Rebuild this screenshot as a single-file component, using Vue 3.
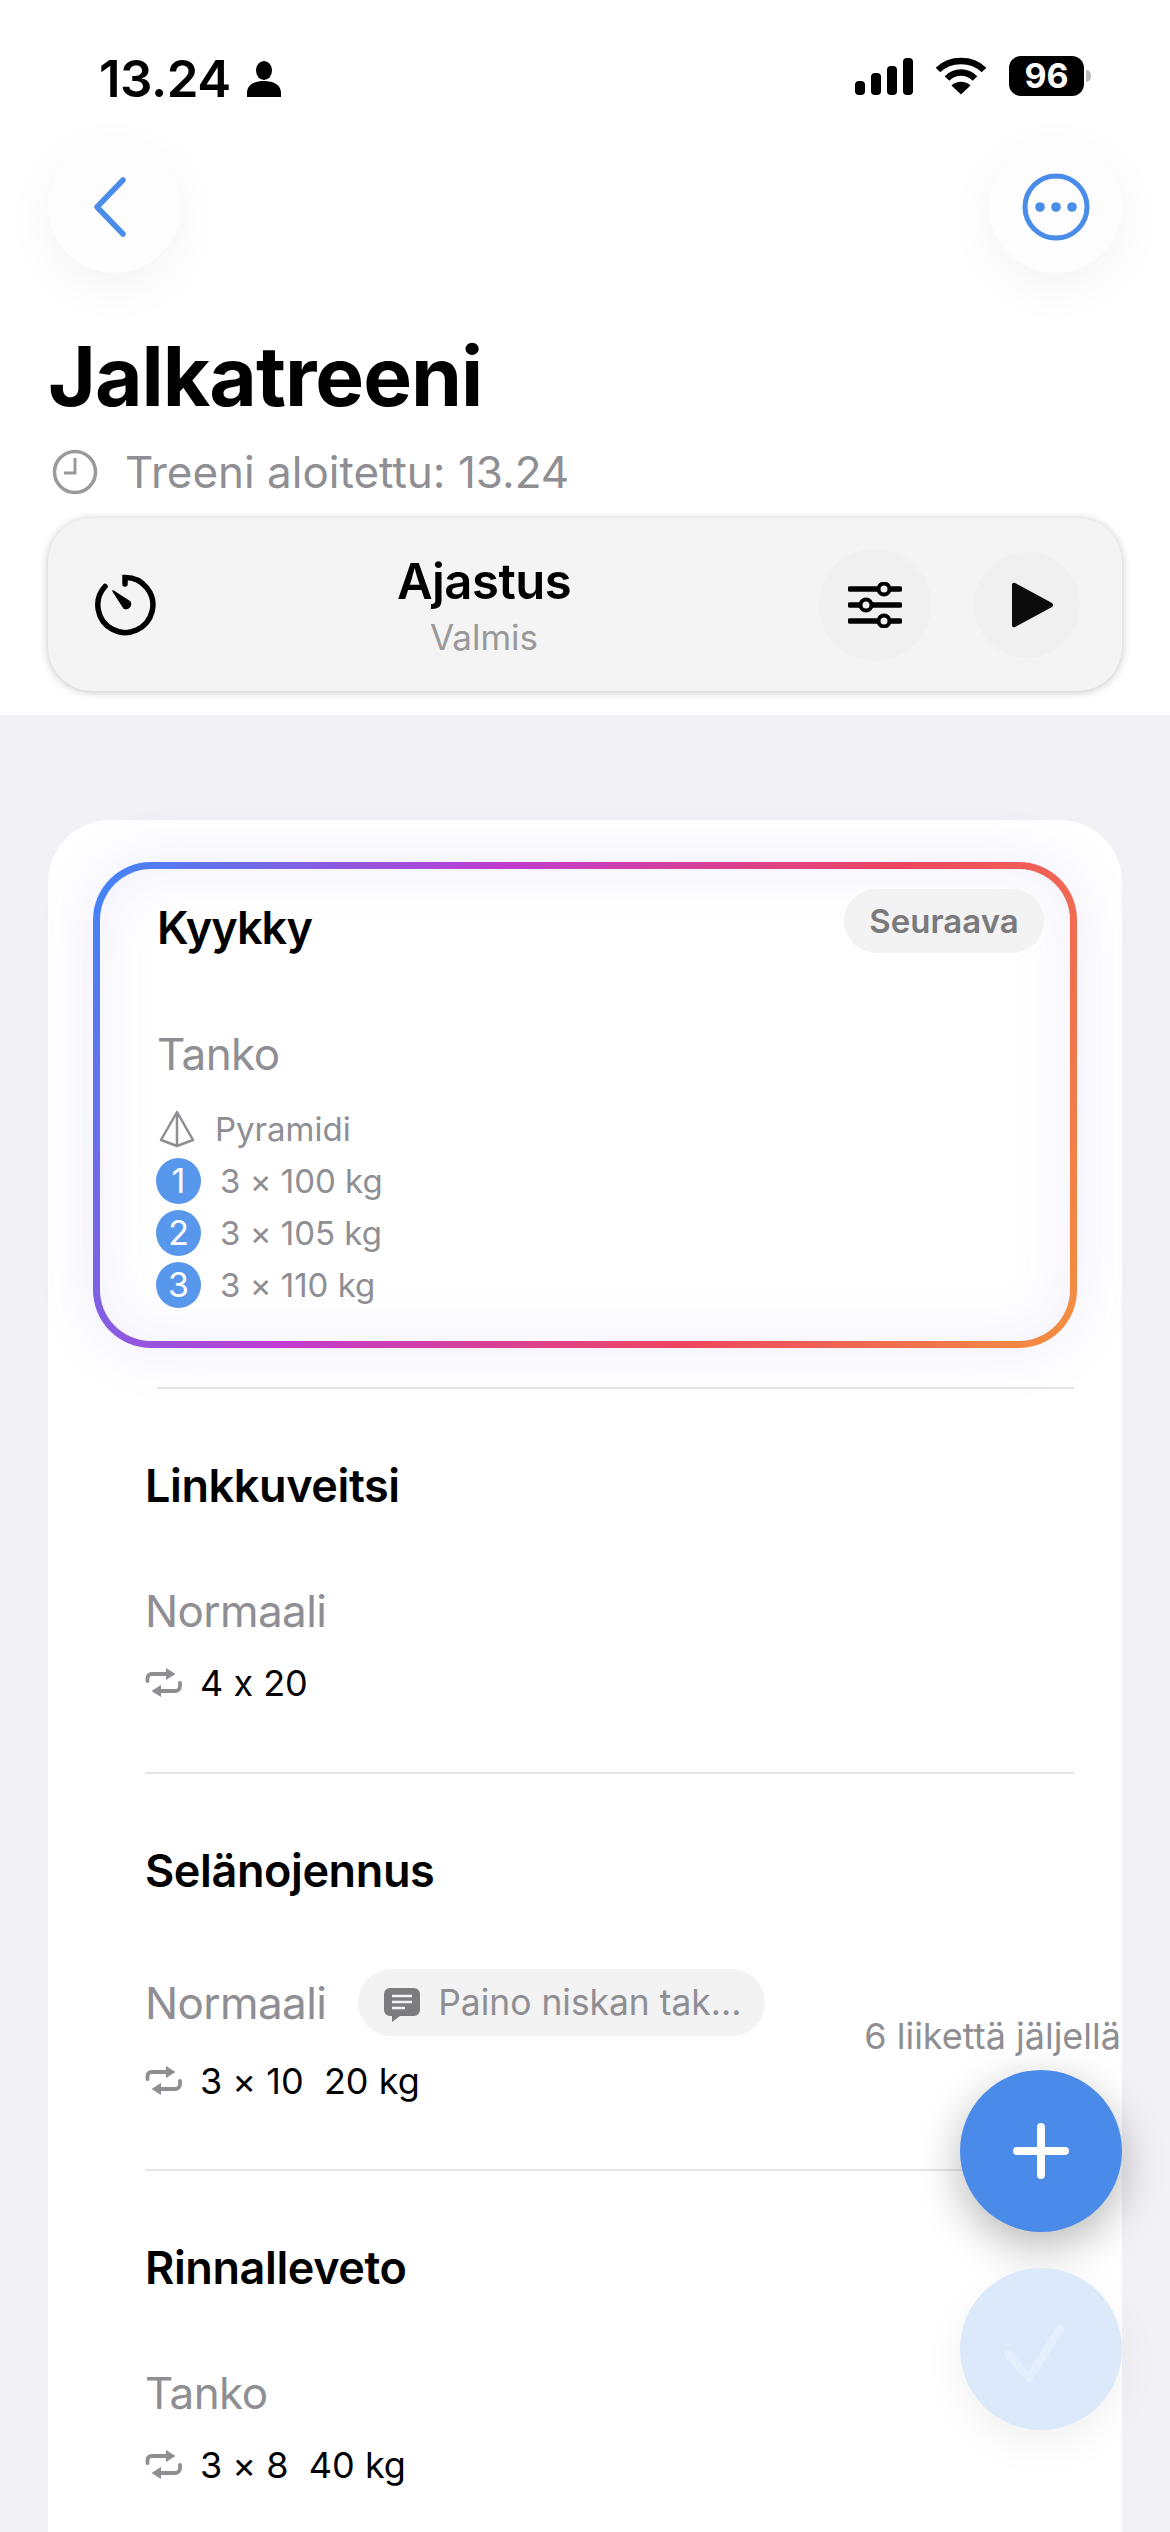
<template>
  <div class="page">
    <header class="head">
      <div class="status">
        <div class="status-left">
          <span class="clock">13.24</span>
          <svg width="34" height="36" viewBox="0 0 34 36"><ellipse cx="17" cy="9.5" rx="8" ry="9.5" fill="#000" /><path d="M0 36v-4c0-8 7-12 17-12s17 4 17 12v4z" fill="#000" /></svg>
        </div>
        <div class="status-right">
          <svg width="58" height="37" viewBox="0 0 58 37" fill="#000"><rect x="0" y="23" width="10" height="14" rx="4" /><rect x="16" y="15" width="10" height="22" rx="4" /><rect x="32" y="8" width="10" height="29" rx="4" /><rect x="48" y="0" width="10" height="37" rx="4" /></svg>
          <svg class="wifi" width="52" height="38" viewBox="0 0 52 38" fill="none" stroke="#000" stroke-width="6.5"><path d="M3 13C15 1 37 1 49 13" /><path d="M12 21.5c8-8 20-8 28 0" /><path d="M26 37.500l-9.500-9c5-5 14-5 19 0z" fill="#000" stroke="none" /></svg>
          <div class="battery">96</div>
          <div class="battery-nub"></div>
        </div>
      </div>

      <div class="nav">
        <button class="round">
          <svg class="back" width="36" height="60" viewBox="0 0 36 60" fill="none" stroke="#4a8de8" stroke-width="5.500" stroke-linecap="round" stroke-linejoin="round"><path d="M30 3L4 30l26 27" /></svg>
        </button>
        <button class="round">
          <svg width="68" height="68" viewBox="0 0 68 68" fill="none"><circle cx="34" cy="34" r="31" stroke="#4a8de8" stroke-width="5" /><circle cx="18" cy="34" r="4.800" fill="#4a8de8" /><circle cx="34" cy="34" r="4.800" fill="#4a8de8" /><circle cx="50" cy="34" r="4.800" fill="#4a8de8" /></svg>
        </button>
      </div>

      <h1 class="title">Jalkatreeni</h1>

      <div class="started">
        <svg width="46" height="46" viewBox="0 0 46 46" fill="none" stroke="#999" stroke-width="3.500"><circle cx="23" cy="23" r="20.500" /><path d="M23 9v15H12" stroke-width="3" /></svg>
        <span>Treeni aloitettu: 13.24</span>
      </div>

      <div class="timer">
        <svg class="stopwatch" width="62" height="62" viewBox="0 0 62 62" fill="none" stroke="#000" stroke-width="5.500" stroke-linecap="round"><path d="M30 10V3.500A27.500 27.500 0 1 1 10 12.500" /><path d="M18 17l17 11a4.500 4.500 0 0 1-6 6z" fill="#000" stroke-width="1.500" stroke-linejoin="round" /></svg>
        <div class="timer-text">
          <div class="timer-name">Ajastus</div>
          <div class="timer-state">Valmis</div>
        </div>
        <button class="soft soft-big">
          <svg width="54" height="46" viewBox="0 0 54 46" fill="none" stroke="#000" stroke-linecap="round"><path d="M2 7h50M2 23h50M2 39h50" stroke-width="5.500" /><circle cx="36" cy="7" r="5.500" fill="#f0f0f0" stroke-width="4" /><circle cx="18" cy="23" r="5.500" fill="#f0f0f0" stroke-width="4" /><circle cx="36" cy="39" r="5.500" fill="#f0f0f0" stroke-width="4" /></svg>
        </button>
        <button class="soft soft-small">
          <svg width="42" height="46" viewBox="0 0 42 46"><path d="M3 1l37 20a2.500 2.500 0 0 1 0 4L3 45a2 2 0 0 1-3-2V3a2 2 0 0 1 3-2z" fill="#0c0c0c" /></svg>
        </button>
      </div>
    </header>

    <section class="card">
      <div class="current">
        <span class="next-badge">Seuraava</span>
        <div class="item-name current-name">Kyykky</div>
        <div class="item-type current-type">Tanko</div>
        <div class="pyramid">
          <svg width="36" height="38" viewBox="0 0 36 38" fill="none" stroke="#8e8e93" stroke-width="2.500" stroke-linejoin="round"><path d="M18 2L2 30l16 6 16-6zM18 2v34" /></svg>
          <span>Pyramidi</span>
        </div>
        <div v-for="(s, i) in sets" :key="i" class="set">
          <span class="set-num">{{ i + 1 }}</span>
          <span>{{ s }}</span>
        </div>
      </div>

      <div class="list">
        <div v-for="item in items" :key="item.name" class="item" :class="{ first: item.first }">
          <div class="item-name">{{ item.name }}</div>
          <div class="type-row" :class="{ 'with-note': item.note }">
            <span class="item-type">{{ item.type }}</span>
            <span v-if="item.note" class="note">
              <svg width="36" height="34" viewBox="0 0 36 34"><path d="M6 0h24a6 6 0 0 1 6 6v16a6 6 0 0 1-6 6H16l-8 6v-6H6a6 6 0 0 1-6-6V6a6 6 0 0 1 6-6z" fill="#7c7c7f" /><path d="M8 8h20M8 14h20M8 20h13" stroke="#f3f3f4" stroke-width="2.500" /></svg>
              <span>{{ item.note }}</span>
            </span>
          </div>
          <div class="reps">
            <svg width="38" height="30" viewBox="0 0 38 30" fill="none" stroke="#8e8e93" stroke-width="3.800" stroke-linecap="round"><path d="M2.500 13v-3a4 4 0 0 1 4-4H23" /><path d="M21 0l9.500 6L21 12z" fill="#8e8e93" stroke="none" /><path d="M35 15v3a5 5 0 0 1-5 5H15" /><path d="M16 17L6.500 23l9.500 6z" fill="#8e8e93" stroke="none" /></svg>
            <span>{{ item.reps }}</span>
          </div>
        </div>
      </div>
    </section>

    <div class="left-count">6 liikettä jäljellä</div>
    <button class="fab fab-add">
      <svg width="56" height="56" viewBox="0 0 56 56" stroke="#fff" stroke-width="8" stroke-linecap="round"><path d="M28 4v48M4 28h48" /></svg>
    </button>
    <button class="fab fab-done">
      <svg width="62" height="58" viewBox="0 0 62 58" fill="none" stroke="#e5eefb" stroke-width="8" stroke-linecap="round" stroke-linejoin="round"><path d="M5 30l21 24L57 5" /></svg>
    </button>
  </div>
</template>

<script setup>
const sets = ['3 × 100 kg', '3 × 105 kg', '3 × 110 kg']

const items = [
  { name: 'Linkkuveitsi', type: 'Normaali', reps: '4 x 20', first: true },
  { name: 'Selänojennus', type: 'Normaali', reps: '3 × 10\u00a0\u00a020 kg', note: 'Paino niskan tak...' },
  { name: 'Rinnalleveto', type: 'Tanko', reps: '3 × 8\u00a0\u00a040 kg' }
]
</script>

<style>
html, body {
  margin: 0;
  background: #f1f1f6;
}
</style>

<style scoped>
.page {
  position: relative;
  width: 1170px;
  height: 2532px;
  overflow: hidden;
  background: #f1f1f6;
  font-family: Inter, "Liberation Sans", sans-serif;
  font-feature-settings: "calt" 0;
  color: #000;
}

button {
  border: none;
  padding: 0;
  display: flex;
  align-items: center;
  justify-content: center;
}

.head {
  background: #fff;
  height: 715px;
  box-sizing: border-box;
  padding: 0 48px;
}

.status {
  height: 140px;
  display: flex;
  justify-content: space-between;
  align-items: flex-start;
  padding: 50px 31px 0 51px;
  box-sizing: border-box;
}

.status-left {
  display: flex;
  align-items: center;
  gap: 16px;
  height: 56px;
}

.clock {
  font-size: 51px;
  font-weight: 600;
  letter-spacing: -0.500px;
}

.status-left svg {
  margin-top: 2px;
}

.status-right {
  display: flex;
  align-items: center;
  height: 56px;
  margin-top: -2px;
}

.wifi {
  margin-left: 22px;
}

.battery {
  margin-left: 22px;
  width: 75px;
  height: 40px;
  border-radius: 12px;
  background: #000;
  color: #fff;
  font-size: 34px;
  font-weight: 700;
  line-height: 40px;
  text-align: center;
}

.battery-nub {
  width: 5px;
  height: 12px;
  margin-left: 2px;
  border-radius: 0 6px 6px 0;
  background: #bbb;
}

.nav {
  display: flex;
  justify-content: space-between;
  height: 133px;
}

.round {
  width: 133px;
  height: 133px;
  border-radius: 50%;
  background: #fdfdfd;
  box-shadow: 0 14px 50px rgba(0, 0, 0, 0.05);
}

.back {
  margin-left: -8px;
}

.title {
  margin: 66px 0 0;
  height: 76px;
  font-size: 82px;
  line-height: 76px;
  font-weight: 700;
  letter-spacing: -1px;
}

.started {
  display: flex;
  align-items: center;
  gap: 27px;
  margin-top: 34px;
  padding-left: 4px;
  height: 46px;
  font-size: 44px;
  color: #8e8e93;
}

.timer {
  position: relative;
  display: flex;
  align-items: center;
  height: 173px;
  margin-top: 23px;
  padding: 0 42px 0 47px;
  box-sizing: border-box;
  border-radius: 44px;
  background: #f4f4f5;
  box-shadow: 0 1px 8px rgba(0, 0, 0, 0.24);
}

.timer-text {
  flex: 1;
  text-align: center;
  margin-left: -2px;
  padding-right: 6px;
}

.timer-name {
  font-size: 49px;
  line-height: 60px;
  font-weight: 600;
  letter-spacing: -0.500px;
}

.timer-state {
  margin-top: 4px;
  font-size: 35px;
  line-height: 42px;
  color: #999;
}

.soft {
  border-radius: 50%;
  background: #f0f0f0;
}

.soft-big {
  width: 112px;
  height: 112px;
}

.soft-small {
  width: 106px;
  height: 106px;
  margin-left: 43px;
}

.soft-small svg {
  margin-left: 12px;
}

.card {
  margin: 105px 48px 0;
  height: 1800px;
  box-sizing: border-box;
  padding: 42px 45px 0;
  border-radius: 62px 62px 0 0;
  background: #fff;
}

.current {
  position: relative;
  height: 486px;
  box-sizing: border-box;
  padding: 31px 57px 0;
  border: 7px solid transparent;
  border-radius: 58px;
  background:
    linear-gradient(#fff, #fff) padding-box,
    linear-gradient(115deg, #3f86f8 0%, #c03cd0 34%, #ee4560 67%, #f39240 100%) border-box;
  box-shadow: 0 0 60px rgba(110, 100, 220, 0.12), inset 0 0 60px rgba(110, 100, 220, 0.1);
}

.next-badge {
  position: absolute;
  top: 20px;
  right: 26px;
  width: 200px;
  height: 64px;
  border-radius: 32px;
  background: #f3f3f4;
  color: #7a7a7c;
  font-size: 33px;
  font-weight: 600;
  line-height: 64px;
  text-align: center;
}

.item-name {
  font-size: 45px;
  line-height: 56px;
  font-weight: 600;
  letter-spacing: -0.400px;
}

.current-name {
  letter-spacing: -1px;
}

.item-type {
  font-size: 44px;
  line-height: 50px;
  letter-spacing: -0.600px;
  color: #8e8e93;
}

.current-type {
  margin-top: 73px;
}

.pyramid {
  display: flex;
  align-items: center;
  gap: 20px;
  height: 40px;
  margin-top: 30px;
  margin-left: 2px;
  font-size: 33px;
  color: #8e8e93;
}

.set {
  display: flex;
  align-items: center;
  gap: 19px;
  height: 46px;
  margin-top: 6px;
  margin-left: -1px;
  font-size: 33px;
  color: #8e8e93;
}

.pyramid + .set {
  margin-top: 9px;
}

.set-num {
  width: 45px;
  height: 46px;
  border-radius: 50%;
  background: #5797ec;
  color: #fff;
  font-size: 34px;
  line-height: 46px;
  text-align: center;
}

.list {
  margin: 39px 3px 0 52px;
}

.item {
  height: 385px;
  box-sizing: border-box;
  padding-top: 69px;
  border-top: 2px solid #e5e5e7;
}

.item:nth-child(2) {
  height: 397px;
}

.item.first {
  margin-left: 12px;
}

.item.first > div {
  margin-left: -12px;
}

.type-row {
  display: flex;
  align-items: center;
  gap: 32px;
  min-height: 50px;
  margin-top: 72px;
}

.type-row.with-note {
  margin-top: 70px;
  margin-bottom: -2px;
}

.note {
  display: flex;
  align-items: center;
  gap: 18px;
  height: 67px;
  padding: 0 24px 0 26px;
  border-radius: 34px;
  background: #f3f3f4;
  color: #8e8e93;
  font-size: 35.400px;
}

.note svg {
  margin-top: 4px;
}

.reps {
  display: flex;
  align-items: center;
  gap: 17px;
  height: 44px;
  margin-top: 25px;
  font-size: 36px;
}

.left-count {
  position: absolute;
  right: 49px;
  top: 2014px;
  font-size: 36px;
  line-height: 44px;
  color: #8e8e93;
}

.fab {
  position: absolute;
  left: 960px;
  width: 162px;
  height: 162px;
  border-radius: 50%;
}

.fab-add {
  top: 2070px;
  background: #4a8ae8;
  box-shadow: 0 14px 44px rgba(0, 0, 0, 0.28);
}

.fab-done {
  top: 2268px;
  background: #dce9fa;
  box-shadow: 0 14px 44px rgba(0, 0, 0, 0.06);
}

.fab-done svg {
  margin-left: -14px;
  margin-top: 8px;
}
</style>
